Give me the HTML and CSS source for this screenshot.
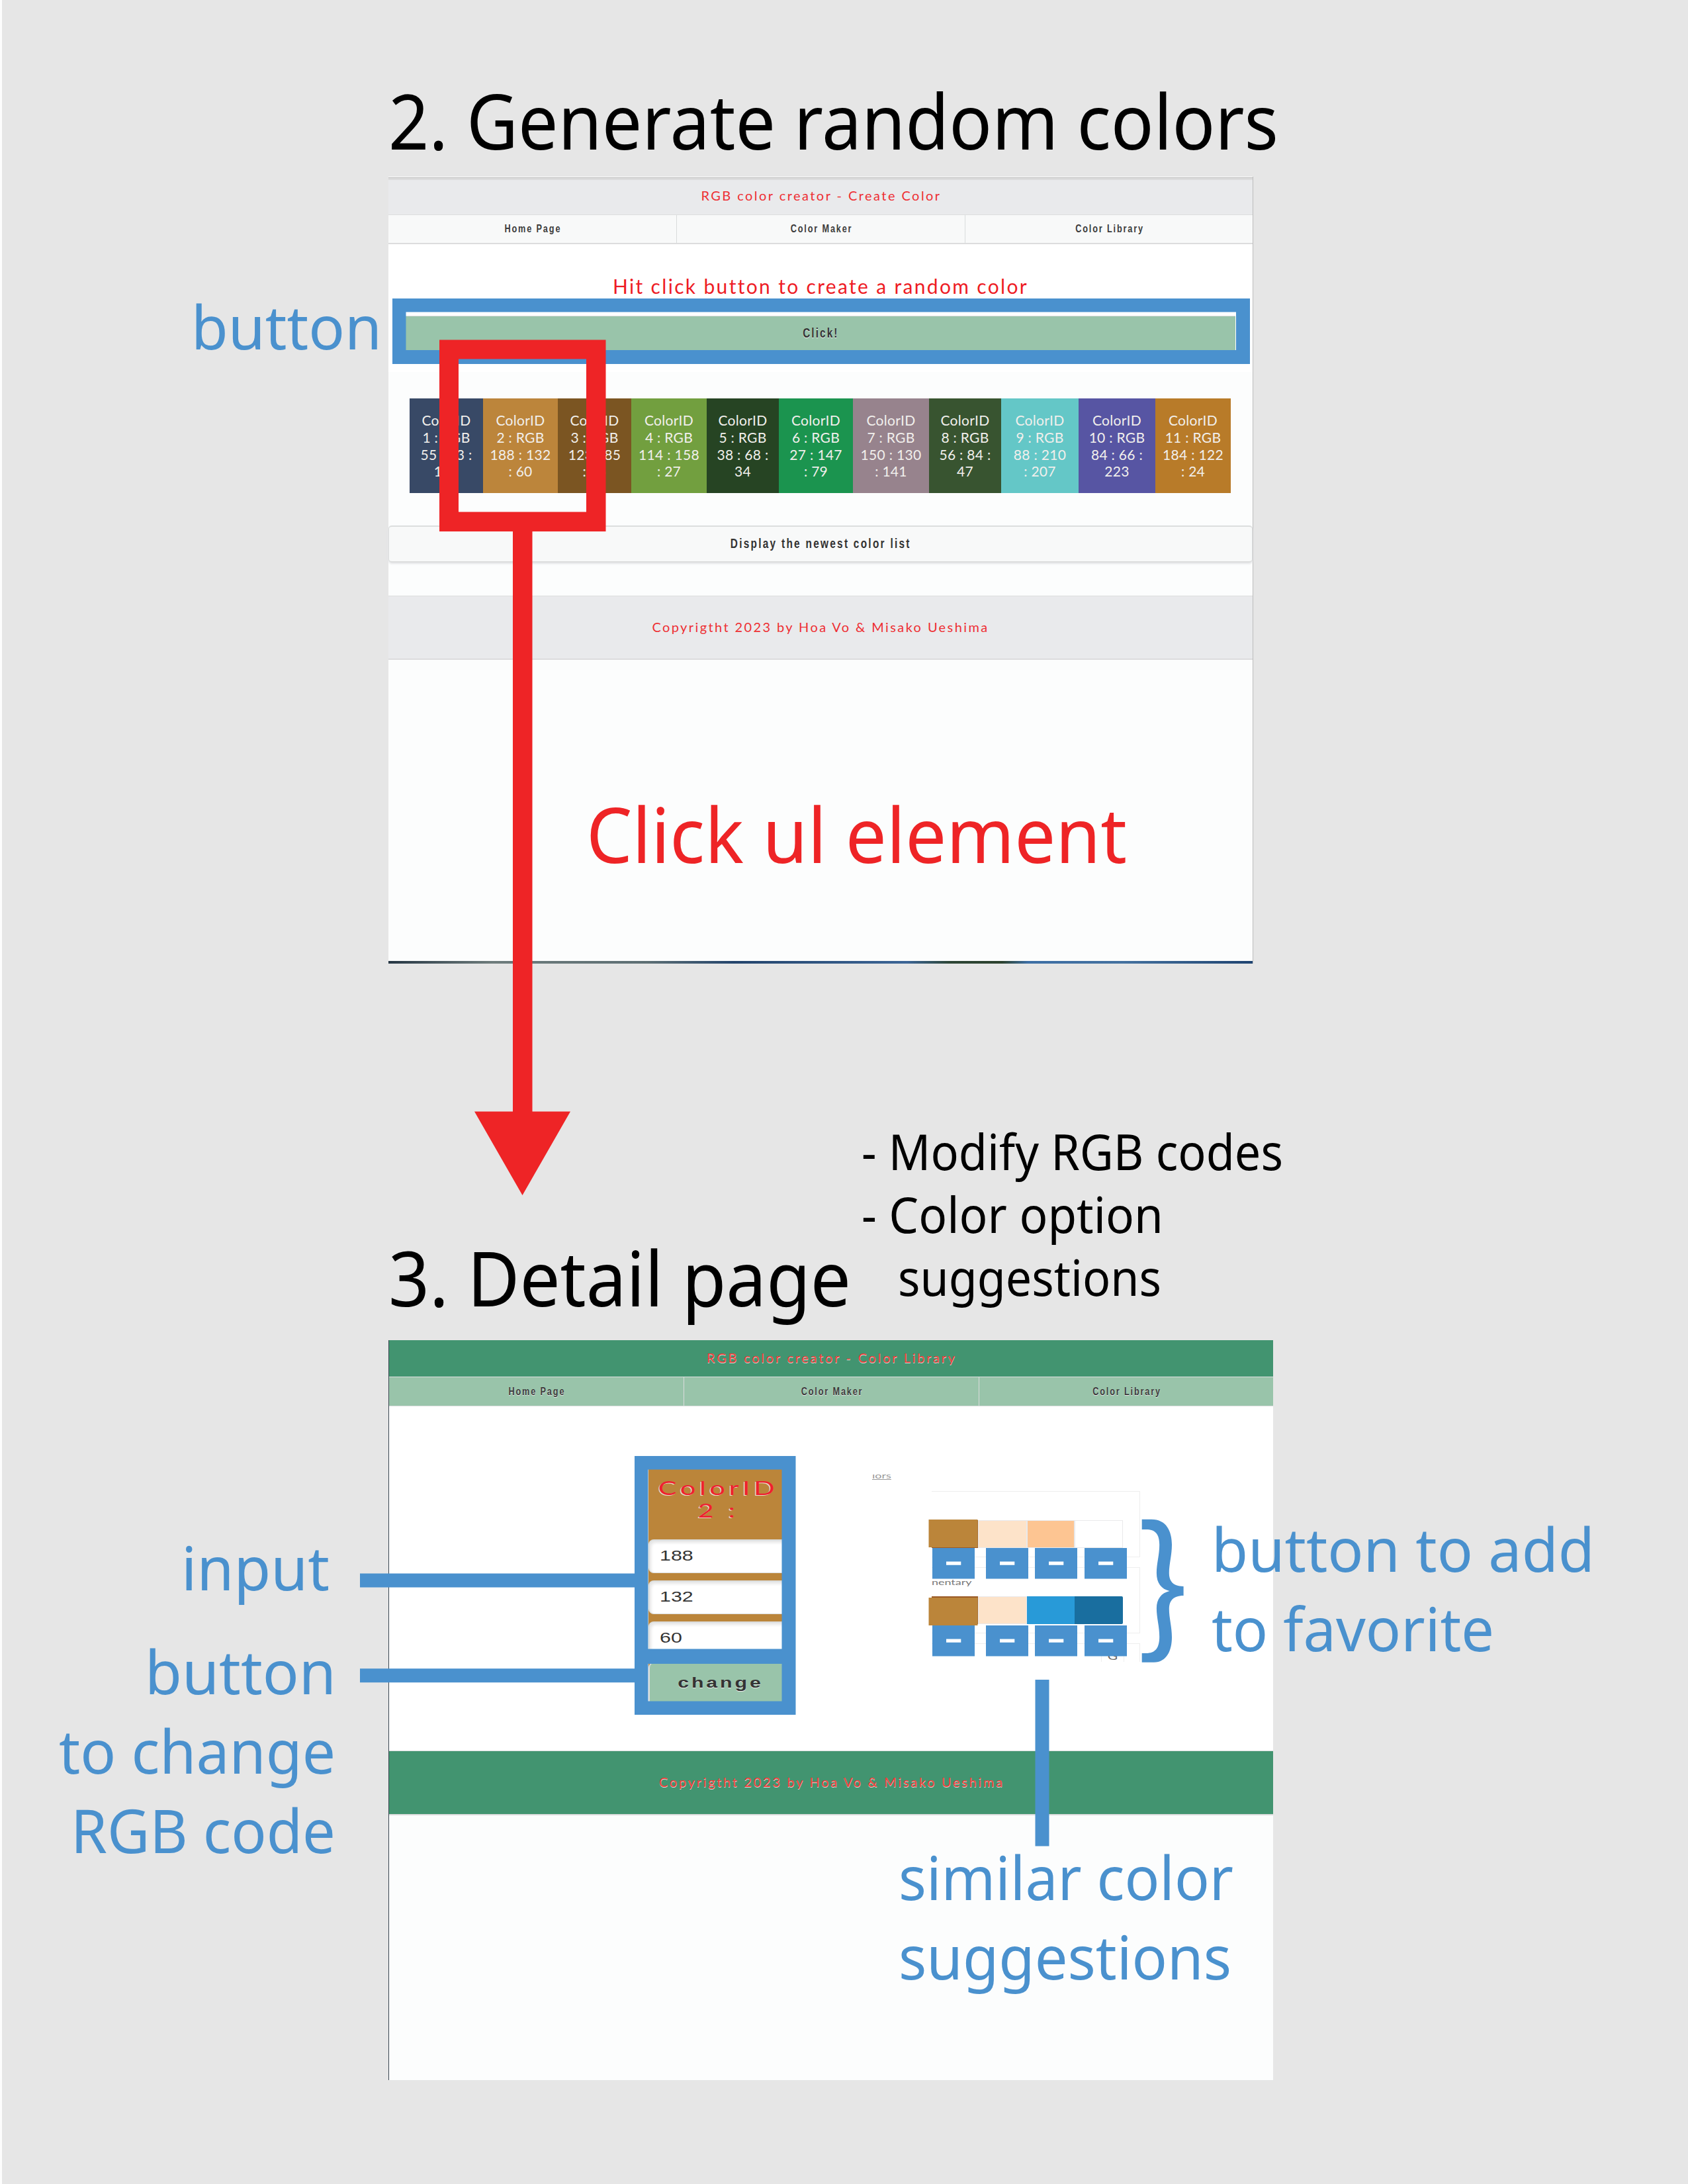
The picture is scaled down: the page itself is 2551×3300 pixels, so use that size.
FILE: index.html
```html
<!DOCTYPE html>
<html lang="en">
<head>
<meta charset="utf-8">
<title>RGB color creator - walkthrough</title>
<link rel="stylesheet" href="styles.css">
</head>
<body>
<div class="board">
  <section class="shot create">
    <header class="bar"><span class="t t-title1">RGB color creator - Create Color</span></header>
    <nav class="nav">
      <a><span class="t t-nav">Home Page</span></a>
      <a><span class="t t-nav">Color Maker</span></a>
      <a><span class="t t-nav">Color Library</span></a>
    </nav>
    <div class="prompt">
      <h2 class="t t-prompt">Hit click button to create a random color</h2>
      <div class="click"><span class="t t-click">Click!</span></div>
    </div>
    <ul class="swatches">
      <li class="s1">ColorID<br>1 : RGB<br>55 : 73 :<br>101</li>
      <li class="s2">ColorID<br>2 : RGB<br>188 : 132<br>: 60</li>
      <li class="s3">ColorID<br>3 : RGB<br>123 : 85<br>: 35</li>
      <li class="s4">ColorID<br>4 : RGB<br>114 : 158<br>: 27</li>
      <li class="s5">ColorID<br>5 : RGB<br>38 : 68 :<br>34</li>
      <li class="s6">ColorID<br>6 : RGB<br>27 : 147<br>: 79</li>
      <li class="s7">ColorID<br>7 : RGB<br>150 : 130<br>: 141</li>
      <li class="s8">ColorID<br>8 : RGB<br>56 : 84 :<br>47</li>
      <li class="s9">ColorID<br>9 : RGB<br>88 : 210<br>: 207</li>
      <li class="s10">ColorID<br>10 : RGB<br>84 : 66 :<br>223</li>
      <li class="s11">ColorID<br>11 : RGB<br>184 : 122<br>: 24</li>
    </ul>
    <div class="display"><span class="t t-display">Display the newest color list</span></div>
    <footer class="foot"><span class="t t-foot1">Copyrigtht 2023 by Hoa Vo &amp; Misako Ueshima</span></footer>
    <div class="photo"></div>
  </section>

  <section class="shot detail">
    <header class="bar"><span class="t t-title2">RGB color creator - Color Library</span></header>
    <nav class="nav">
      <a><span class="t t-nav">Home Page</span></a>
      <a><span class="t t-nav">Color Maker</span></a>
      <a><span class="t t-nav">Color Library</span></a>
    </nav>
    <div class="content">
      <div class="form">
        <div class="form-head"><span class="t t-id">ColorID</span><span class="t t-id">2 :</span></div>
        <div class="field"><span>188</span></div>
        <div class="field"><span>132</span></div>
        <div class="field"><span>60</span></div>
        <div class="change"><span>change</span></div>
      </div>
      <div class="link"><span>ıors</span></div>
      <div class="panels">
        <div class="panel"><div class="row row1"><i></i><i></i><i></i><i></i></div></div>
        <div class="panel"><span class="name">nentary</span><div class="row row2"><i></i><i></i><i></i><i></i></div></div>
        <div class="panel last"><div class="cell"><span>G</span></div></div>
      </div>
    </div>
    <footer class="foot"><span class="t t-foot2">Copyrigtht 2023 by Hoa Vo &amp; Misako Ueshima</span></footer>
  </section>

  <svg class="notes" viewBox="0 0 2551 3300" width="2551" height="3300">
    <!-- frames round the click button and the form -->
    <g class="frame">
      <path d="M593 451H1889V550H593ZM613.5 471.5V529H1868V471.5Z"/>
      <path d="M959 2200H1202.5V2591H959ZM979.5 2220.5V2491.5H1181.5V2220.5ZM979.5 2514V2570.5H1181.5V2514Z"/>
    </g>
    <!-- selected swatch and arrow to the detail page -->
    <path class="pick" d="M664 513.5H915.5V803H664ZM693 542.5V773.5H886V542.5Z"/>
    <path class="pick" d="M775 802H804.5V1679.500H862L789.500 1806L717 1679.500H775Z"/>
    <!-- connectors -->
    <g class="blue">
      <rect x="544" y="2377.5" width="416" height="21"/>
      <rect x="544" y="2521.200" width="416" height="21"/>
      <rect x="1564.500" y="2538" width="21" height="251.500"/>
    </g>
    <rect class="brown" x="1403.500" y="2296" width="74" height="42"/>
    <rect class="brown" x="1403.500" y="2414" width="74" height="42"/>
    <g class="frame">
      <path id="fav" d="M1409 2339H1473V2385.500H1409ZM1430 2359.500V2364.800H1452.300V2359.500Z"/>
      <use href="#fav" x="81"/><use href="#fav" x="155"/><use href="#fav" x="230"/>
      <use href="#fav" y="117"/><use href="#fav" x="81" y="117"/><use href="#fav" x="155" y="117"/><use href="#fav" x="230" y="117"/>
    </g>
    <path class="blue" d="M1725.700 2295.700H1740C1763 2295.700 1771 2314 1771 2334C1771 2350 1766.800 2363 1766.800 2377C1766.800 2388 1772 2397 1788.600 2397V2411C1772 2411 1766.800 2420 1766.800 2431C1766.800 2445 1771 2458 1771 2474C1771 2494 1763 2511.700 1744 2511.700H1725.700V2498H1732C1746 2498 1752.200 2490 1752.200 2473C1752.200 2457 1747.900 2445 1747.900 2430C1747.900 2416 1755 2407 1767.500 2404C1755 2401 1747.900 2392 1747.900 2377C1747.900 2362 1752.200 2350 1752.200 2334C1752.200 2318 1746 2311 1732 2311H1725.700Z"/>

    <g class="black">
      <text x="587" y="226" font-size="115" textLength="1345" lengthAdjust="spacingAndGlyphs">2. Generate random colors</text>
      <text x="587" y="1974" font-size="115" textLength="699" lengthAdjust="spacingAndGlyphs">3. Detail page</text>
      <text x="1302" y="1767.500" font-size="75" textLength="637" lengthAdjust="spacingAndGlyphs">- Modify RGB codes</text>
      <text x="1302" y="1862.500" font-size="75" textLength="456" lengthAdjust="spacingAndGlyphs">- Color option</text>
      <text x="1357" y="1957.500" font-size="75" textLength="398" lengthAdjust="spacingAndGlyphs">suggestions</text>
    </g>
    <text class="red" x="886" y="1303.500" font-size="115" textLength="817" lengthAdjust="spacingAndGlyphs">Click ul element</text>
    <g class="blue">
      <text x="289" y="528" font-size="92" textLength="288" lengthAdjust="spacingAndGlyphs">button</text>
      <text x="274" y="2403" font-size="92" textLength="224" lengthAdjust="spacingAndGlyphs">input</text>
      <text x="219" y="2560" font-size="92" textLength="289" lengthAdjust="spacingAndGlyphs">button</text>
      <text x="89" y="2680" font-size="92" textLength="418" lengthAdjust="spacingAndGlyphs">to change</text>
      <text x="107" y="2800" font-size="92" textLength="400" lengthAdjust="spacingAndGlyphs">RGB code</text>
      <text x="1831" y="2375" font-size="92" textLength="579" lengthAdjust="spacingAndGlyphs">button to add</text>
      <text x="1831" y="2495" font-size="92" textLength="427" lengthAdjust="spacingAndGlyphs">to favorite</text>
      <text x="1358" y="2871" font-size="92" textLength="506" lengthAdjust="spacingAndGlyphs">similar color</text>
      <text x="1358" y="2991" font-size="92" textLength="503" lengthAdjust="spacingAndGlyphs">suggestions</text>
    </g>
  </svg>
</div>
</body>
</html>
```
FILE: styles.css
```css
* { box-sizing: border-box; }
body { margin: 0; background: #e6e6e6; font-family: "Lato", sans-serif; }
.board {
  position: relative;
  width: 2551px;
  height: 3300px;
  padding: 267px 0 0 584px;
  border-left: 3px solid #fdfdfd;
  background: #e6e6e6;
  overflow: hidden;
}
.shot { display: flex; flex-direction: column; background: #fcfdfd; }
.t { display: block; white-space: nowrap; }
.bar, .nav a, .foot, .click, .display { display: flex; align-items: center; justify-content: center; }
.nav { display: grid; grid-template-columns: repeat(3, 1fr); }
.nav a + a { border-left: 1px solid #d9dcdc; }
.t-nav { font: bold 16.5px/20px "Liberation Sans", sans-serif; letter-spacing: 2.400px; color: #3c3c3c; padding: 0 0 2px 3px; transform: scaleX(.77); }

/* create page */
.create { width: 1307px; height: 1189px; border-right: 1px solid #bcbcbc; }
.create .bar { height: 58px; border-top: 1px solid #fff; border-bottom: 1px solid #dcdede; background: #e9eaec; box-shadow: inset 0 1px #b9b9b9, inset 0 4px #dcdcdd; }
.create .nav { height: 44px; background: #f8f9f9; border-bottom: 2px solid #dcdcdd; }
.t-title1 { font-size: 20px; letter-spacing: 2.450px; color: #ee2f33; padding: 0 0 3px 2px; }
.prompt { height: 193px; background: #fff; padding: 45px 26px 0; }
.t-prompt { margin: 0; height: 63px; font-size: 30px; font-weight: 400; line-height: 36px; letter-spacing: 2.330px; text-align: center; color: #ee1c25; }
.click { height: 56px; padding-bottom: 6px; border-top: 1px solid #ddd; background: #99c4aa; }
.t-click { font: bold 20px/24px "Liberation Sans", sans-serif; letter-spacing: 2.700px; color: #333; text-shadow: 0 1px #f3f3f3; transform: scaleX(.77); }
.swatches {
  display: grid;
  grid-template-columns: 111px 113px 111px 114px 109px 112px 115px 109px 117px 116px 114px;
  list-style: none;
  height: 143px;
  margin: 40px 0 49px;
  padding: 0 0 0 32px;
}
.swatches li { padding-top: 20px; text-align: center; font-size: 21px; line-height: 25.800px; letter-spacing: .3px; color: #f1efec; }
.s1 { background: #384966; } .s2 { background: #bc853b; } .s3 { background: #7b5522; }
.s4 { background: #729f3f; } .s5 { background: #264423; } .s6 { background: #1b944f; }
.s7 { background: #97838d; } .s8 { background: #385430; } .s9 { background: #64c7c7; }
.s10 { background: #5755a3; } .s11 { background: #b87b29; }
.display { height: 56px; border: 2px solid #dcdede; border-left-width: 1px; border-right-width: 1px; border-radius: 5px; background: #f8f9f9; box-shadow: 0 2px 3px #e4e5e7; }
.t-display { font: bold 20px/24px "Liberation Sans", sans-serif; letter-spacing: 2.950px; color: #333; padding-bottom: 2px; transform: scaleX(.77); }
.create .foot { height: 97px; margin-top: 50px; border-top: 1px solid #dcdede; border-bottom: 2px solid #dcdcdd; background: #e9eaec; }
.t-foot1 { font-size: 20px; letter-spacing: 2.400px; color: #ee2f33; padding-bottom: 3px; }
.photo { height: 4px; margin-top: auto; background: linear-gradient(90deg, #263744, #6e7c7c 12%, #5d6f74 30%, #24456d 40%, #3c6596 60%, #2d4636 65%, #2c422e 71%, #3d6fa5 74%, #44719f 85%, #1f4471); }

/* detail page */
.detail { width: 1337px; height: 1118px; margin-top: 569px; border-left: 1px solid #3b4752; }
.detail .bar { height: 55px; background: #429470; }
.detail .nav { height: 45px; border-top: 1px solid #dcdede; border-bottom: 1px solid #dcdede; background: #99c4aa; }
.detail .t-nav { text-shadow: 0 1px #eee; }
.t-title2, .t-foot2 { font-size: 20px; letter-spacing: 2.750px; color: #f03a35; text-shadow: 0 1px #ddd; padding: 0 0 3px 2px; }
.t-foot2 { letter-spacing: 2.700px; }
.content { display: flex; height: 520px; background: #fff; }
.form { width: 202px; height: 352px; margin: 95px 0 0 392px; background: #bb853a; overflow: hidden; }
.form-head { height: 106px; padding: 11px 0 0 9px; }
.t-id { font-size: 28px; line-height: 34px; letter-spacing: 3.800px; color: #ee2030; text-shadow: -1px 1px #ecd9cc; text-align: center; transform: scaleX(1.48); }
.field { display: flex; align-items: center; height: 51px; margin-bottom: 11px; padding: 0 0 2px 15px; border: 2px solid #dcdede; border-width: 2px 0 1px 2px; border-radius: 8px 0 0 8px; background: #fff; box-shadow: inset 2px 3px 4px #e5e5e5; }
.field span { font: 22px/26px "Liberation Sans", sans-serif; color: #333; transform: scaleX(1.38); transform-origin: left; }
.change { display: flex; align-items: center; justify-content: center; height: 60px; border-top: 1px solid #ddd; border-left: 2px solid #ddd; border-radius: 8px 0 0; background: #99c4aa; padding-left: 14px; }
.change span { font: bold 22px/26px "Liberation Sans", sans-serif; letter-spacing: 2.800px; color: #333; text-shadow: 0 1px #eee; transform: scaleX(1.38); }
.link { width: 226px; height: 14px; margin: 100px 0 0; padding-left: 136px; }
.link span { display: block; width: 22px; font-size: 12px; line-height: 9px; color: #999; text-decoration: underline; transform: scaleX(1.5); transform-origin: left; }
.panels { width: 315px; height: 258px; margin-top: 128px; overflow: hidden; }
.panel { height: 100px; margin-bottom: 15px; border: 1px solid #eee; border-left: 0; }
.row { display: grid; grid-template-columns: 70px 74px 72px 73px; height: 42px; }
.row1 { margin-top: 43px; }
.row i { border: 1px solid #e9e9eb; }
.row1 i:first-child, .row2 i:first-child { background: #9a5a26; border: 0; }
.row i:nth-child(2) { background: #fde3c9; }
.row1 i:nth-child(3) { background: #fdc592; }
.row2 i:nth-child(3) { background: #289ad8; border: 0; }
.row2 i:nth-child(4) { background: #196e9f; border: 0; border-radius: 0 2px 2px 0; }
.name { display: block; width: 60px; height: 43px; padding-top: 15px; font-size: 11.500px; line-height: 14px; color: #777; transform: scaleX(1.56); transform-origin: left; }
.panel.last { height: 60px; }
.cell { width: 35px; height: 50px; margin-left: 256px; border: solid #eee; border-width: 0 1px; text-align: center; }
.cell span { display: block; padding-top: 9px; font-size: 15px; line-height: 18px; color: #666; transform: scaleX(1.4); }
.detail .foot { height: 98px; border-top: 1px solid #dcdede; border-bottom: 2px solid #dcdcdd; background: #429470; }

/* annotations */
.notes { position: absolute; left: -3px; top: 0; font-family: "Noto Sans", sans-serif; }
.frame, .blue { fill: #4a91ce; fill-rule: evenodd; }
.pick, .red { fill: #ee2426; fill-rule: evenodd; }
.brown { fill: #bb853a; }
.black { fill: #000; }
```
